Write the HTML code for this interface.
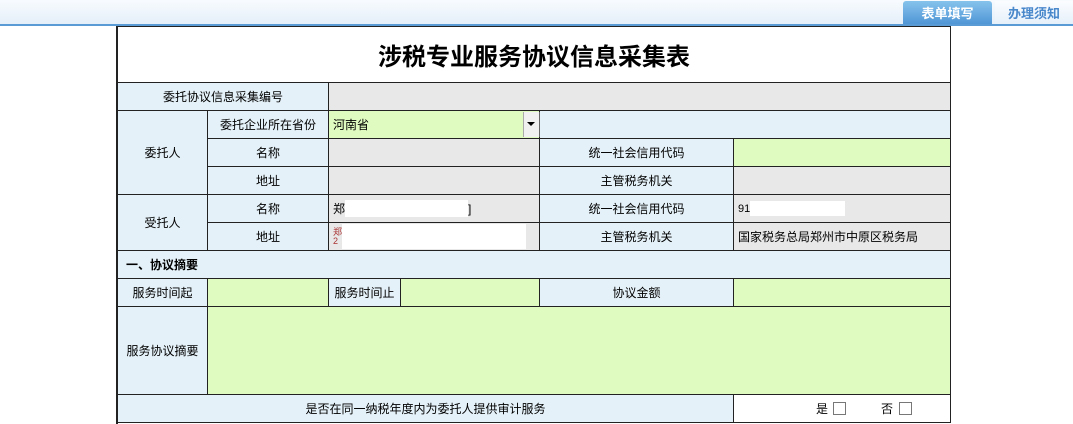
<!DOCTYPE html>
<html><head><meta charset="utf-8"><style>
body{margin:0;width:1073px;height:424px;overflow:hidden;background:#fff;font-family:"Liberation Sans","WenQuanYi Zen Hei","Noto Sans CJK SC",sans-serif;font-size:12px;color:#000;position:relative}
.c{position:absolute;box-sizing:border-box;border-right:1px solid #222;border-bottom:1px solid #222;display:flex;align-items:center;justify-content:center;white-space:nowrap}
.l{background:#e4f1f8}.g{background:#e8e8e8}.v{background:#e0fbbf}.w{background:#fff}
.left{justify-content:flex-start;padding-left:4px}
</style></head><body>
<div style="position:absolute;left:0;top:0;width:1073px;height:24px;background:linear-gradient(#f8fbfe,#e4eff9)"></div>
<div style="position:absolute;left:0;top:24px;width:1073px;height:2px;background:#5b9bd5"></div>
<div style="position:absolute;left:903px;top:1px;width:89px;height:23px;background:linear-gradient(#86c3ec,#5096d6);border-radius:3px 3px 0 0;color:#fff;font-weight:bold;font-size:13px;display:flex;align-items:center;justify-content:center">表单填写</div>
<div style="position:absolute;left:995px;top:1px;width:78px;height:23px;background:linear-gradient(#fbfdff,#e6f0fa);color:#4a88cc;font-weight:bold;font-size:13px;display:flex;align-items:center;justify-content:center">办理须知</div>

<div style="position:absolute;left:116px;top:26px;width:2px;height:398px;background:#222"></div>
<div style="position:absolute;left:116px;top:26px;width:835px;height:1px;background:#222"></div>

<div class="c w" style="left:118px;top:27px;width:833px;height:56px;font-family:'Noto Sans CJK SC',sans-serif;font-size:24px;font-weight:bold">涉税专业服务协议信息采集表</div>

<div class="c l" style="left:118px;top:83px;width:211px;height:28px">委托协议信息采集编号</div>
<div class="c g" style="left:329px;top:83px;width:622px;height:28px"></div>

<div class="c l" style="left:118px;top:111px;width:90px;height:84px">委托人</div>
<div class="c l" style="left:208px;top:111px;width:121px;height:28px">委托企业所在省份</div>
<div class="c v left" style="left:329px;top:111px;width:211px;height:28px">河南省</div>
<div style="position:absolute;left:523px;top:112px;width:15px;height:25px;background:#f0f0f0;border-left:1px solid #aaa;border-right:1px solid #666"><div style="position:absolute;left:3px;top:10px;border:4px solid transparent;border-top:4px solid #000"></div></div>
<div class="c l" style="left:540px;top:111px;width:411px;height:28px"></div>

<div class="c l" style="left:208px;top:139px;width:121px;height:28px">名称</div>
<div class="c g" style="left:329px;top:139px;width:211px;height:28px"></div>
<div class="c l" style="left:540px;top:139px;width:194px;height:28px">统一社会信用代码</div>
<div class="c v" style="left:734px;top:139px;width:217px;height:28px"></div>

<div class="c l" style="left:208px;top:167px;width:121px;height:28px">地址</div>
<div class="c g" style="left:329px;top:167px;width:211px;height:28px"></div>
<div class="c l" style="left:540px;top:167px;width:194px;height:28px">主管税务机关</div>
<div class="c g" style="left:734px;top:167px;width:217px;height:28px"></div>

<div class="c l" style="left:118px;top:195px;width:90px;height:56px">受托人</div>
<div class="c l" style="left:208px;top:195px;width:121px;height:28px">名称</div>
<div class="c g left" style="left:329px;top:195px;width:211px;height:28px">郑<span style="display:inline-block;width:123px;height:17px;background:#fff"></span>]</div>
<div class="c l" style="left:540px;top:195px;width:194px;height:28px">统一社会信用代码</div>
<div class="c g left" style="left:734px;top:195px;width:217px;height:28px;font-size:11px">91<span style="display:inline-block;width:95px;height:15px;background:#fff"></span></div>

<div class="c l" style="left:208px;top:223px;width:121px;height:28px">地址</div>
<div class="c g left" style="left:329px;top:223px;width:211px;height:28px"><span style="font-size:9px;line-height:9px;color:#a33">郑<br>2</span><span style="display:inline-block;width:184px;height:25px;background:#fff"></span></div>
<div class="c l" style="left:540px;top:223px;width:194px;height:28px">主管税务机关</div>
<div class="c g left" style="left:734px;top:223px;width:217px;height:28px">国家税务总局郑州市中原区税务局</div>

<div class="c l left" style="left:118px;top:251px;width:833px;height:28px;font-weight:bold;padding-left:8px">一、协议摘要</div>

<div class="c l" style="left:118px;top:279px;width:90px;height:28px">服务时间起</div>
<div class="c v" style="left:208px;top:279px;width:121px;height:28px"></div>
<div class="c l" style="left:329px;top:279px;width:72px;height:28px">服务时间止</div>
<div class="c v" style="left:401px;top:279px;width:139px;height:28px"></div>
<div class="c l" style="left:540px;top:279px;width:194px;height:28px">协议金额</div>
<div class="c v" style="left:734px;top:279px;width:217px;height:28px"></div>

<div class="c l" style="left:118px;top:307px;width:90px;height:88px">服务协议摘要</div>
<div class="c v" style="left:208px;top:307px;width:743px;height:88px"></div>

<div class="c l" style="left:118px;top:395px;width:616px;height:28px">是否在同一纳税年度内为委托人提供审计服务</div>
<div class="c w" style="left:734px;top:395px;width:217px;height:28px;justify-content:flex-end;padding-right:38px">是<span style="display:inline-block;width:11px;height:11px;border:1px solid #777;margin:0 35px 0 5px"></span>否<span style="display:inline-block;width:11px;height:11px;border:1px solid #777;margin-left:6px"></span></div>
</body></html>
